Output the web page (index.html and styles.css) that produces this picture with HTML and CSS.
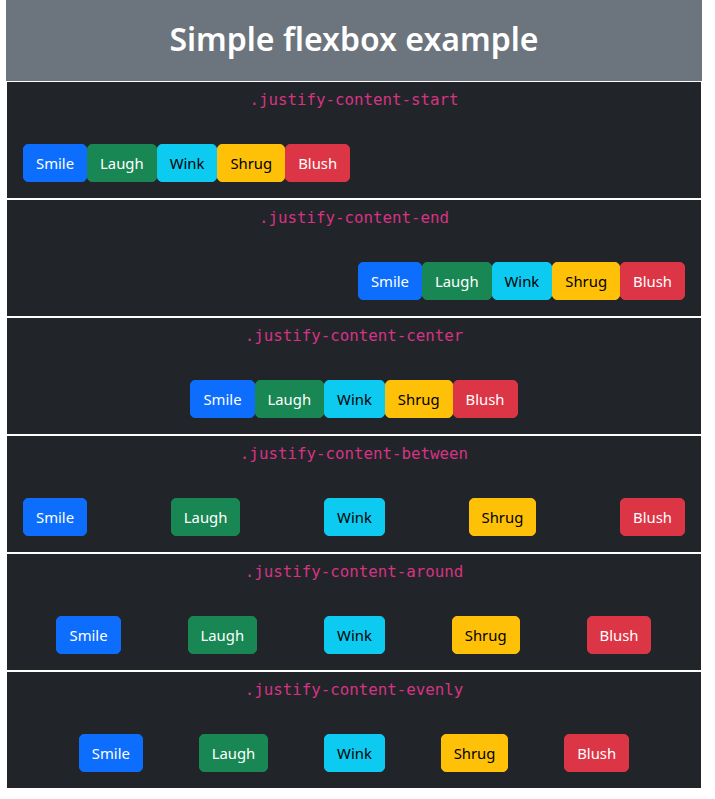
FILE: index.html
```html
<!DOCTYPE html>
<html lang="en">
<head>
<meta charset="utf-8">
<title>Simple flexbox example</title>
<link rel="stylesheet" href="styles.css">
</head>
<body>
<div class="page">
  <header class="header"><h1>Simple flexbox example</h1></header>

  <section class="demo">
    <p class="label"><code>.justify-content-start</code></p>
    <div class="row start">
      <button class="btn primary">Smile</button><button class="btn success">Laugh</button><button class="btn info">Wink</button><button class="btn warning">Shrug</button><button class="btn danger">Blush</button>
    </div>
  </section>

  <section class="demo">
    <p class="label"><code>.justify-content-end</code></p>
    <div class="row end">
      <button class="btn primary">Smile</button><button class="btn success">Laugh</button><button class="btn info">Wink</button><button class="btn warning">Shrug</button><button class="btn danger">Blush</button>
    </div>
  </section>

  <section class="demo">
    <p class="label"><code>.justify-content-center</code></p>
    <div class="row center">
      <button class="btn primary">Smile</button><button class="btn success">Laugh</button><button class="btn info">Wink</button><button class="btn warning">Shrug</button><button class="btn danger">Blush</button>
    </div>
  </section>

  <section class="demo">
    <p class="label"><code>.justify-content-between</code></p>
    <div class="row between">
      <button class="btn primary">Smile</button><button class="btn success">Laugh</button><button class="btn info">Wink</button><button class="btn warning">Shrug</button><button class="btn danger">Blush</button>
    </div>
  </section>

  <section class="demo">
    <p class="label"><code>.justify-content-around</code></p>
    <div class="row around">
      <button class="btn primary">Smile</button><button class="btn success">Laugh</button><button class="btn info">Wink</button><button class="btn warning">Shrug</button><button class="btn danger">Blush</button>
    </div>
  </section>

  <section class="demo">
    <p class="label"><code>.justify-content-evenly</code></p>
    <div class="row evenly">
      <button class="btn primary">Smile</button><button class="btn success">Laugh</button><button class="btn info">Wink</button><button class="btn warning">Shrug</button><button class="btn danger">Blush</button>
    </div>
  </section>
</div>
</body>
</html>
```

FILE: styles.css
```css
* { box-sizing: border-box; }

body {
  margin: 0;
  background: #fff;
  font-family: "Noto Sans", "Open Sans", sans-serif;
  font-size: 16px;
  line-height: 1.5;
}

.page {
  width: 696px;
  margin: 0 6px;
}

.header {
  height: 81px;
  background: #6c757d;
  display: flex;
  align-items: center;
  justify-content: center;
}

.header h1 {
  margin: 0;
  color: #fff;
  font-size: 32px;
  font-weight: 600;
  line-height: 1.2;
  padding-bottom: 2px;
}

.demo {
  background: #212529;
  border: 1px solid #fff;
  height: 118px;
}

.label {
  margin: 0;
  padding-top: 5px;
  height: 46px;
  text-align: center;
  line-height: 24px;
}

.label code {
  font-family: "DejaVu Sans Mono", "Liberation Mono", monospace;
  font-size: 15.8px;
  color: #d63384;
}

.row {
  display: flex;
  padding: 16px;
}

.start { justify-content: flex-start; }
.end { justify-content: flex-end; }
.center { justify-content: center; }
.between { justify-content: space-between; }
.around { justify-content: space-around; }
.evenly { justify-content: space-evenly; }

.btn {
  font-family: "Noto Sans", "Open Sans", sans-serif;
  font-size: 14.85px;
  line-height: 24px;
  padding: 6px 12px;
  border: 1px solid transparent;
  border-radius: 5px;
  height: 38px;
  color: #fff;
  cursor: pointer;
}

.primary { background: #0d6efd; border-color: #0d6efd; }
.success { background: #198754; border-color: #198754; }
.info { background: #0dcaf0; border-color: #0dcaf0; color: #000; }
.warning { background: #ffc107; border-color: #ffc107; color: #000; }
.danger { background: #dc3545; border-color: #dc3545; }
```
